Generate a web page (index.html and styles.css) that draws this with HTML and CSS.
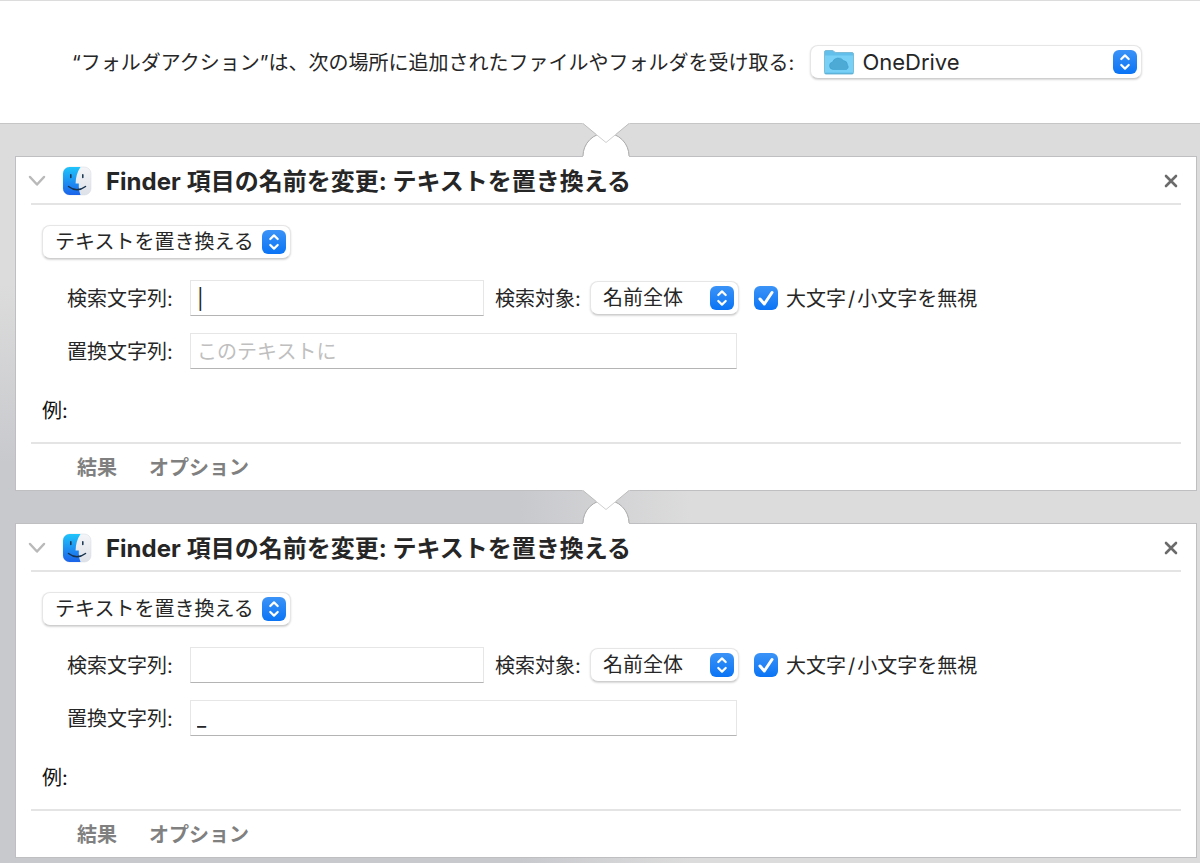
FILE: index.html
```html
<!DOCTYPE html>
<html lang="ja">
<head>
<meta charset="utf-8">
<title>フォルダアクション</title>
<link rel="stylesheet" href="styles.css">
</head>
<body>
<svg class="defs" aria-hidden="true">
  <defs>
    <linearGradient id="blue" x1="0" y1="0" x2="0" y2="1"><stop offset="0" stop-color="#3b93f7"/><stop offset="1" stop-color="#0a74f5"/></linearGradient>
    <linearGradient id="faceBlue" x1="0" y1="0" x2="0" y2="1"><stop offset="0" stop-color="#1fc4fb"/><stop offset="1" stop-color="#1b63ea"/></linearGradient>
    <linearGradient id="faceWhite" x1="0" y1="0" x2="0" y2="1"><stop offset="0" stop-color="#f4f5f8"/><stop offset="1" stop-color="#dde1e8"/></linearGradient>
    <symbol id="stepper" viewBox="0 0 24 24">
      <rect width="24" height="24" rx="6" fill="url(#blue)"/>
      <path d="M8.300 9l3.700-3.600 3.700 3.600M8.300 15l3.700 3.600 3.700-3.600" fill="none" stroke="#fff" stroke-width="2.2" stroke-linecap="round" stroke-linejoin="round"/>
    </symbol>
    <symbol id="finder" viewBox="0 0 30 30">
      <rect x="1" y="1" width="28" height="28" rx="6.5" fill="url(#faceWhite)" stroke="#d5d9e0" stroke-width=".5"/>
      <path d="M18.500 1H7.500A6.500 6.500 0 0 0 1 7.500V22.500A6.500 6.500 0 0 0 7.500 29H18.500Q17 25.500 16.800 21V17.500H13.600Q13.800 8 18.500 1Z" fill="url(#faceBlue)"/>
      <path d="M8.800 8.800v2.600M20.800 8.800v2.600" stroke="#17324d" stroke-width="1.500" stroke-linecap="round"/>
      <path d="M6.500 20.500Q15 27 23.500 20.500" fill="none" stroke="#17324d" stroke-width="1.500" stroke-linecap="round"/>
    </symbol>
    <symbol id="joint" viewBox="0 0 48 34">
      <path d="M1 34V33A23 23 0 0 1 47 33V34Z" fill="#fff"/>
      <path d="M1 33A23 23 0 0 1 47 33" fill="none" stroke="#a9a9a9"/>
      <path d="M0 0L1 .5 24 19.500 47 .5 48 0Z" fill="#fff"/>
      <path d="M1 .5L14.500 11.700M33.500 11.700L47 .5" fill="none" stroke="#bcbcbc"/>
      <path d="M14.500 11.700L24 19.500 33.500 11.700" fill="none" stroke="#d0d0d0"/>
    </symbol>
    <symbol id="chevron" viewBox="0 0 18 12"><path d="M2 2l7 7.500L16 2" fill="none" stroke="#b9b9b9" stroke-width="2.500" stroke-linecap="round" stroke-linejoin="round"/></symbol>
    <symbol id="cross" viewBox="0 0 14 14"><path d="M2 2l10 10M12 2L2 12" fill="none" stroke="#6b6b6b" stroke-width="2.600" stroke-linecap="round"/></symbol>
    <symbol id="tick" viewBox="0 0 24 24"><path d="M6 13l4.300 5L18 6.500" fill="none" stroke="#fff" stroke-width="3" stroke-linecap="round" stroke-linejoin="round"/></symbol>
  </defs>
</svg>

<header class="source">
  <label for="folder">“フォルダアクション”は、次の場所に追加されたファイルやフォルダを受け取る:</label>
  <span class="popup popup-folder">
    <select id="folder"><option>OneDrive</option></select>
    <svg class="folder-icon" viewBox="0 0 30 25" aria-hidden="true">
      <path d="M.5 2A1.500 1.500 0 0 1 2 .5H8Q9 .5 10 1.500T12 2.500H28A1.500 1.500 0 0 1 29.500 4V22.500A1.500 1.500 0 0 1 28 24H2A1.500 1.500 0 0 1 .5 22.500Z" fill="#62bfeb" stroke="#7cbcd9"/>
      <path d="M1 5.500H29V22.500H1Z" fill="#78d0f7"/>
      <path d="M1 23.500H29" stroke="#5fb2d8"/>
      <path d="M9 19.500A3.800 3.800 0 0 1 8.500 12A6.300 6.300 0 0 1 19.500 10.500A4.600 4.600 0 0 1 23.500 15A2.800 2.800 0 0 1 22.500 19.500Z" fill="#4caad5" stroke="#389bc9" stroke-width=".5"/>
    </svg>
    <svg class="stepper" aria-hidden="true"><use href="#stepper"/></svg>
  </span>
</header>

<main class="workflow">
  <div class="link"><svg class="joint" aria-hidden="true"><use href="#joint"/></svg></div>

  <section class="card">
    <div class="card-head">
      <button class="icon-button" aria-label="折りたたむ"><svg class="chevron"><use href="#chevron"/></svg></button>
      <svg class="finder" aria-hidden="true"><use href="#finder"/></svg>
      <h2>Finder<span class="title-ja">項目の名前を変更: テキストを置き換える</span></h2>
      <button class="icon-button close" aria-label="削除"><svg class="cross"><use href="#cross"/></svg></button>
    </div>
    <div class="card-body">
      <span class="popup popup-mode"><select aria-label="操作"><option>テキストを置き換える</option></select><svg class="stepper" aria-hidden="true"><use href="#stepper"/></svg></span>
      <div class="row">
        <label class="name" for="find1">検索文字列:</label>
        <input class="field field-find" id="find1" type="text" value="|">
        <label class="target" for="target1">検索対象:</label>
        <span class="popup popup-target"><select id="target1"><option>名前全体</option></select><svg class="stepper" aria-hidden="true"><use href="#stepper"/></svg></span>
        <span class="check"><input id="case1" type="checkbox" checked><svg class="tick" aria-hidden="true"><use href="#tick"/></svg></span>
        <label for="case1">大文字<span class="slash">/</span>小文字を無視</label>
      </div>
      <div class="row">
        <label class="name" for="rep1">置換文字列:</label>
        <input class="field field-replace" id="rep1" type="text" placeholder="このテキストに">
      </div>
      <p class="example">例:</p>
    </div>
    <div class="card-foot"><button>結果</button><button>オプション</button></div>
  </section>

  <div class="link"><svg class="joint" aria-hidden="true"><use href="#joint"/></svg></div>

  <section class="card">
    <div class="card-head">
      <button class="icon-button" aria-label="折りたたむ"><svg class="chevron"><use href="#chevron"/></svg></button>
      <svg class="finder" aria-hidden="true"><use href="#finder"/></svg>
      <h2>Finder<span class="title-ja">項目の名前を変更: テキストを置き換える</span></h2>
      <button class="icon-button close" aria-label="削除"><svg class="cross"><use href="#cross"/></svg></button>
    </div>
    <div class="card-body">
      <span class="popup popup-mode"><select aria-label="操作"><option>テキストを置き換える</option></select><svg class="stepper" aria-hidden="true"><use href="#stepper"/></svg></span>
      <div class="row">
        <label class="name" for="find2">検索文字列:</label>
        <input class="field field-find" id="find2" type="text">
        <label class="target" for="target2">検索対象:</label>
        <span class="popup popup-target"><select id="target2"><option>名前全体</option></select><svg class="stepper" aria-hidden="true"><use href="#stepper"/></svg></span>
        <span class="check"><input id="case2" type="checkbox" checked><svg class="tick" aria-hidden="true"><use href="#tick"/></svg></span>
        <label for="case2">大文字<span class="slash">/</span>小文字を無視</label>
      </div>
      <div class="row">
        <label class="name" for="rep2">置換文字列:</label>
        <input class="field field-replace" id="rep2" type="text" value="_">
      </div>
      <p class="example">例:</p>
    </div>
    <div class="card-foot"><button>結果</button><button>オプション</button></div>
  </section>
</main>
</body>
</html>
```
FILE: styles.css
```css
* { box-sizing: border-box; }

body {
  margin: 0;
  min-height: 100vh;
  display: flex;
  flex-direction: column;
  font-family: Inter, "Noto Sans CJK JP", sans-serif;
  font-size: 20px;
  line-height: 28px;
  color: #262626;
  background: #fff;
}

button, input, select { font: inherit; color: inherit; }

button {
  padding: 0;
  border: 0;
  background: none;
}

label { padding-top: 2px; }

svg { display: block; }
.defs { position: absolute; width: 0; height: 0; }

/* Folder chooser */
.source {
  display: flex;
  align-items: center;
  gap: 16px;
  min-height: 124px;
  padding-left: 72px;
  padding-right: 58px;
  border-top: 1px solid #dcdcdc;
  border-bottom: 1px solid #c6c6c6;
  white-space: nowrap;
}

/* Pop-up menus */
.popup {
  position: relative;
  display: flex;
}

.popup select {
  appearance: none;
  width: 100%;
  height: 34px;
  padding: 0 36px 0 12px;
  border: 1px solid #e6e6e6;
  border-bottom-color: #cfcfcf;
  border-radius: 8px;
  background: #fff;
  box-shadow: 0 1px 2px rgba(0, 0, 0, 0.16);
}

.stepper {
  position: absolute;
  right: 5px;
  top: 5px;
  width: 24px;
  height: 24px;
  pointer-events: none;
}

.popup-folder { flex: 1; }
.popup-folder select { padding-left: 51px; font-size: 22px; }
.popup-mode { width: 249px; }
.popup-target { width: 149px; margin-right: 15px; }

.folder-icon {
  position: absolute;
  left: 14px;
  top: 5px;
  width: 30px;
  height: 25px;
  pointer-events: none;
}

/* Workflow */
.workflow {
  flex: 1;
  padding: 0 3px 5px 15px;
  background:
    linear-gradient(to bottom, #dcdcdc 160px, rgba(220, 220, 220, 0) 340px),
    linear-gradient(to right, #c8c9cd 520px, #dcdcdc 690px);
}

.link {
  display: flex;
  justify-content: center;
  height: 32px;
}

.joint {
  position: relative;
  width: 48px;
  height: 34px;
  margin-top: -1px;
}

.card {
  border: 1px solid #bfbfc1;
  background: #fff;
}

.card-head {
  display: flex;
  align-items: center;
  height: 48px;
  margin: 0 15px;
  padding-top: 2px;
  border-bottom: 2px solid #e4e4e4;
}

.icon-button {
  display: flex;
  align-items: center;
  justify-content: center;
  width: 12px;
  height: 24px;
}

.icon-button.close { width: 20px; margin-left: auto; }
.chevron { width: 18px; height: 12px; flex: none; }
.cross { width: 14px; height: 14px; }
.finder { width: 30px; height: 30px; margin-left: 19px; }

h2 {
  margin: 0 0 0 14px;
  padding-top: 2px;
  font-size: 24px;
  font-weight: 700;
}

.title-ja { margin-left: 6px; }

.card-body {
  display: flex;
  flex-direction: column;
  gap: 17px;
  padding: 20px 26px 0;
}

.row {
  display: flex;
  align-items: center;
  height: 36px;
  white-space: nowrap;
}

.row:first-of-type { margin-top: 4px; }
.name { width: 148px; padding-left: 25px; }
.target { width: 106px; padding-left: 11px; }
.slash { margin: 0 2px; }

.field {
  height: 36px;
  padding: 2px 6px 0;
  border: 1px solid #e6e6e6;
  border-bottom-color: #b4b4b4;
  background: #fff;
  outline: 0;
}

.field::placeholder { color: #bfbfbf; opacity: 1; }
.field-find { width: 294px; }
.field-replace { width: 547px; }

.check { position: relative; display: flex; margin-right: 8px; }

.check input {
  appearance: none;
  width: 24px;
  height: 24px;
  margin: 0;
  border-radius: 6px;
  background: linear-gradient(#3b93f7, #0a74f5);
}

.tick {
  position: absolute;
  left: 0;
  top: 0;
  width: 24px;
  height: 24px;
  pointer-events: none;
}

.example {
  margin: 11px 0 17px;
  color: #111;
}

.card-foot {
  display: flex;
  align-items: center;
  gap: 32px;
  height: 48px;
  margin: 0 15px;
  padding: 2px 0 0 46px;
  border-top: 2px solid #e4e4e4;
}

.card-foot button {
  font-weight: 700;
  color: #808080;
}
```
